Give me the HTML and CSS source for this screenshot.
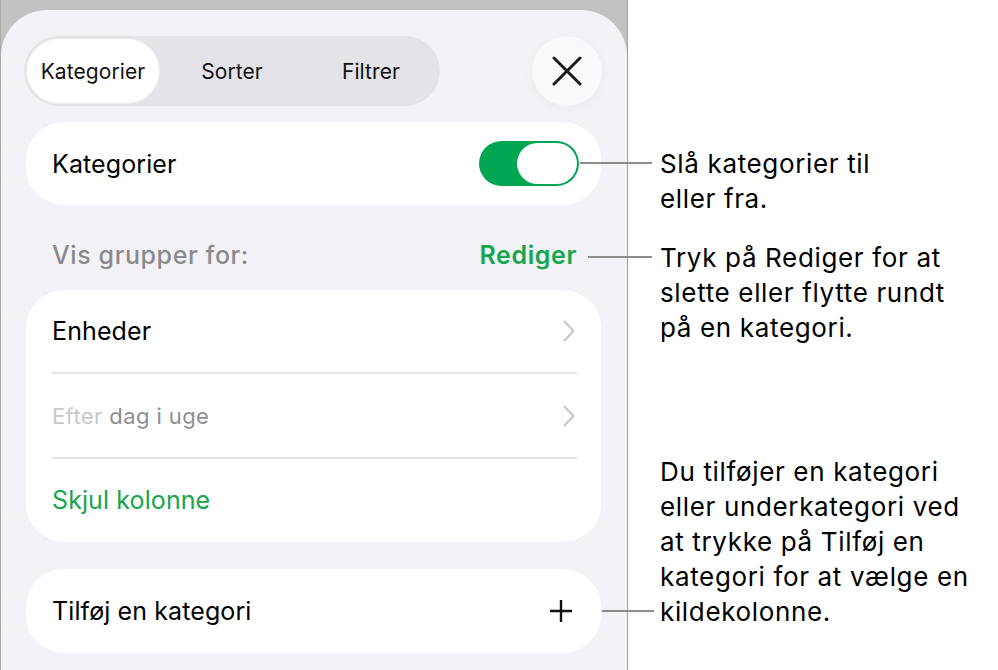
FILE: index.html
```html
<!DOCTYPE html>
<html lang="da">
<head>
<meta charset="utf-8">
<title>Kategorier</title>
<link rel="stylesheet" href="styles.css">
</head>
<body>
<div class="stage">
  <div class="device">
    <div class="panel">
      <div class="header">
        <div class="segmented">
          <div class="seg seg-active">Kategorier</div>
          <div class="seg seg-mid">Sorter</div>
          <div class="seg">Filtrer</div>
        </div>
        <div class="close">
          <svg width="30" height="30" viewBox="0 0 30 30"><path d="M2 2 L28 28 M28 2 L2 28" stroke="#1c1c1e" stroke-width="3" stroke-linecap="round" fill="none"/></svg>
        </div>
      </div>

      <div class="card card-single">
        <span class="label">Kategorier</span>
        <div class="toggle"><div class="knob"></div></div>
      </div>

      <div class="section-head">
        <span class="section-title">Vis grupper for:</span>
        <span class="section-action">Rediger</span>
      </div>

      <div class="card card-list">
        <div class="row">
          <span class="label">Enheder</span>
          <svg class="chev" width="12" height="22" viewBox="0 0 12 22"><path d="M1.5 1.5 L10.5 11 L1.5 20.5" stroke="#c4c4c7" stroke-width="2" fill="none" stroke-linecap="round" stroke-linejoin="round"/></svg>
        </div>
        <div class="divider"></div>
        <div class="row">
          <span class="label label-small"><span class="faint">Efter</span> <span class="muted">dag i uge</span></span>
          <svg class="chev" width="12" height="22" viewBox="0 0 12 22"><path d="M1.5 1.5 L10.5 11 L1.5 20.5" stroke="#c4c4c7" stroke-width="2" fill="none" stroke-linecap="round" stroke-linejoin="round"/></svg>
        </div>
        <div class="divider"></div>
        <div class="row row-last">
          <span class="label green">Skjul kolonne</span>
        </div>
      </div>

      <div class="card card-single card-add">
        <span class="label">Tilføj en kategori</span>
        <svg width="24" height="24" viewBox="0 0 24 24"><path d="M12 1 V23 M1 12 H23" stroke="#111" stroke-width="2.4" fill="none"/></svg>
      </div>
    </div>
  </div>

  <div class="callout callout-1">
    <div class="leader leader-1"></div>
    <p class="note">Slå kategorier til<br>eller fra.</p>
  </div>
  <div class="callout callout-2">
    <div class="leader leader-2"></div>
    <p class="note">Tryk på Rediger for at<br>slette eller flytte rundt<br>på en kategori.</p>
  </div>
  <div class="callout callout-3">
    <div class="leader leader-3"></div>
    <p class="note">Du tilføjer en kategori<br>eller underkategori ved<br>at trykke på Tilføj en<br>kategori for at vælge en<br>kildekolonne.</p>
  </div>
</div>
</body>
</html>
```
FILE: styles.css
```css
* { box-sizing: border-box; }
html, body {
  margin: 0;
  padding: 0;
  background: #ffffff;
  width: 998px;
  height: 670px;
  overflow: hidden;
  font-family: Inter, "Noto Sans", sans-serif;
  color: #000;
}
.stage {
  position: relative;
  width: 998px;
  height: 670px;
}
.device {
  width: 628px;
  height: 670px;
  background: #c2c2c2;
  border-left: 1px solid #a9a9a9;
  border-right: 1px solid #a3a3a3;
  padding-top: 10px;
}
.panel {
  height: 660px;
  background: #f2f2f7;
  border-radius: 46px 46px 0 0;
  padding: 26px 25px 0 25px;
}
.header {
  display: flex;
  align-items: center;
  justify-content: space-between;
  height: 70px;
  margin-left: -2px;
}
.segmented {
  display: flex;
  align-items: center;
  width: 416px;
  height: 70px;
  background: #e3e3e8;
  border-radius: 35px;
  padding: 3px;
}
.seg {
  width: 132px;
  height: 64px;
  display: flex;
  align-items: center;
  justify-content: center;
  font-size: 21px;
  color: #111;
  letter-spacing: 0.1px;
}
.seg-mid { width: 146px; }
.seg-active {
  background: #ffffff;
  border-radius: 32px;
  box-shadow: 0 0 0 1px #ececf0;
}
.close {
  width: 70px;
  height: 70px;
  border-radius: 50%;
  background: #f9f9fb;
  display: flex;
  align-items: center;
  justify-content: center;
  box-shadow: 0 2px 12px rgba(0,0,0,0.04);
}
.card {
  background: #ffffff;
  border-radius: 38px;
  width: 575px;
}
.card-single {
  height: 83px;
  margin-top: 16px;
  display: flex;
  align-items: center;
  justify-content: space-between;
  padding: 0 22px 0 26px;
}
.label {
  font-size: 25px;
  letter-spacing: 0.1px;
}
.label-small {
  font-size: 22px;
  letter-spacing: 0.4px;
}
.toggle {
  width: 100px;
  height: 45px;
  border-radius: 23px;
  background: #00a651;
  padding: 2px;
  display: flex;
  justify-content: flex-end;
}
.knob {
  width: 60px;
  height: 41px;
  border-radius: 21px;
  background: #ffffff;
}
.section-head {
  display: flex;
  justify-content: space-between;
  align-items: center;
  width: 575px;
  height: 36px;
  margin-top: 32px;
  margin-bottom: 17px;
  padding: 0 24px 0 26px;
}
.section-title {
  font-size: 25px;
  color: #8a8a8e;
  font-weight: 500;
  letter-spacing: 0.6px;
}
.section-action {
  font-size: 25px;
  color: #16a64b;
  font-weight: 600;
  letter-spacing: 0.6px;
}
.card-list {
  height: 252px;
  padding: 0 24px 0 26px;
  display: flex;
  flex-direction: column;
}
.row {
  height: 83px;
  display: flex;
  align-items: center;
  justify-content: space-between;
}
.row-last { height: 84px; }
.chev { margin-right: 2px; }
.divider {
  height: 2px;
  background: #e4e4e8;
}
.faint { color: #c7c7cc; }
.muted { color: #8e8e93; }
.green { color: #16a64b; }
.card-add {
  margin-top: 27px;
  height: 84px;
  padding-right: 28px;
}
.callout {
  position: absolute;
  left: 0;
  top: 0;
}
.leader {
  position: absolute;
  height: 2px;
  background: #8c8c8c;
}
.leader-1 { left: 580px; top: 162px; width: 72px; }
.leader-2 { left: 588px; top: 256px; width: 64px; }
.leader-3 { left: 602px; top: 610px; width: 52px; }
.note {
  position: absolute;
  left: 660px;
  margin: 0;
  width: 330px;
  font-size: 26px;
  line-height: 35px;
  letter-spacing: 0.65px;
  color: #000;
  white-space: nowrap;
}
.callout-1 .note { top: 146px; }
.callout-2 .note { top: 240px; }
.callout-3 .note { top: 454px; }
```
